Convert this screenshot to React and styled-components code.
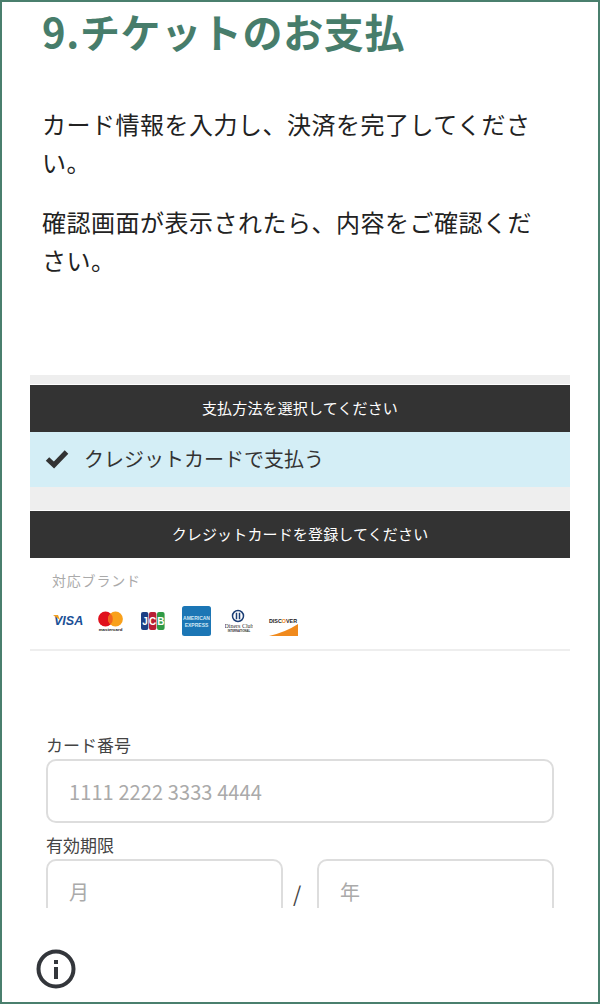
import React from "react";
import styled, { createGlobalStyle } from "styled-components";

const GlobalStyle = createGlobalStyle`
  html, body {
    margin: 0;
    padding: 0;
    background: #fff;
  }
  * {
    box-sizing: border-box;
  }
`;

const Frame = styled.div`
  width: 600px;
  height: 1004px;
  border: 2px solid #4a7f6d;
  background: #fff;
  overflow: hidden;
  display: flex;
  flex-direction: column;
  font-family: "Noto Sans CJK JP", "Noto Sans", sans-serif;
`;

const Viewport = styled.div`
  height: 906px;
  overflow: hidden;
  flex: none;
`;

const Intro = styled.section`
  padding: 0 60px 0 40px;
  height: 373px;
`;

const Title = styled.h1`
  margin: 0;
  height: 58px;
  line-height: 58px;
  font-size: 40px;
  font-weight: 700;
  color: #477d6b;
  letter-spacing: 0.65px;
  white-space: nowrap;
`;

const Paragraph = styled.p`
  margin: 0 0 22px;
  font-size: 24px;
  line-height: 38px;
  letter-spacing: 0.5px;
  color: #222;
  &:first-of-type {
    margin-top: 45px;
  }
`;

const Payment = styled.section`
  margin: 0 28px;
`;

const GraySpacer = styled.div`
  height: ${(p) => p.$h}px;
  background: #eeeeee;
`;

const DarkBar = styled.div`
  height: 47px;
  margin-top: 1px;
  padding-bottom: 2px;
  background: #333333;
  color: #fff;
  font-size: 15px;
  letter-spacing: 0.15px;
  display: flex;
  align-items: center;
  justify-content: center;
`;

const Selected = styled.div`
  height: 55px;
  padding: 0 0 2px 15px;
  background: #d4eef6;
  display: flex;
  align-items: center;
  gap: 15px;
  color: #333;
  font-size: 20px;
`;

const BrandBlock = styled.div`
  height: 93px;
  padding: 12px 0 0 22px;
  border-bottom: 2px solid #eeeeee;
`;

const BrandLabel = styled.div`
  font-size: 14px;
  line-height: 20px;
  color: #aaaaaa;
  letter-spacing: 0.8px;
`;

const BrandRow = styled.div`
  display: grid;
  grid-template-columns: 45px 43px 41px 43px 43px 30px;
  margin: 16px 0 0 1px;
`;

const Form = styled.form`
  margin: 0 44px;
  padding-top: 82px;
`;

const FieldLabel = styled.label`
  display: block;
  height: 26px;
  font-size: 17px;
  line-height: 24px;
  color: #444;
`;

const FieldBox = styled.div`
  flex: 1;
  height: 64px;
  border: 2px solid #dddddd;
  border-radius: 10px;
  padding-left: 21px;
  display: flex;
  align-items: center;
  font-size: 20px;
  letter-spacing: 0.1px;
  color: #aaaaaa;
`;

const CardField = styled(FieldBox)`
  margin-bottom: 10px;
`;

const DateRow = styled.div`
  display: flex;
  align-items: center;
`;

const Slash = styled.span`
  width: 34px;
  padding: 3px 6px 0 0;
  text-align: center;
  font-size: 21px;
  line-height: 24px;
  color: #444;
`;

const Footer = styled.footer`
  padding: 39px 0 0 32px;
`;

const InfoIcon = () => (
  <svg width="44" height="44" viewBox="0 0 44 44" fill="none">
    <circle cx="22" cy="22" r="17.5" stroke="#33363b" strokeWidth="4" />
    <rect x="20" y="20" width="4" height="12" fill="#33363b" />
    <rect x="20" y="13" width="4" height="4" fill="#33363b" />
  </svg>
);

const CheckIcon = () => (
  <svg width="24" height="20" viewBox="0 0 24 20" fill="none">
    <path d="M2.5 10 L9 16 L21.5 3" stroke="#333" strokeWidth="5" />
  </svg>
);

const Visa = () => (
  <svg width="30" height="30" viewBox="0 0 30 30">
    <text x="1" y="19" fontFamily="Liberation Sans" fontSize="12.5" fontWeight="700" fontStyle="italic" fill="#1a5096">
      VISA
    </text>
    <path d="M0 9 L5 9 L7 14 Z" fill="#f0a020" />
  </svg>
);

const Mastercard = () => (
  <svg width="25" height="30" viewBox="0 0 25 30">
    <circle cx="7.5" cy="13" r="7.4" fill="#e0101c" />
    <circle cx="17.5" cy="13" r="7.4" fill="#f9a11b" />
    <path d="M12.5 7.6 A7.4 7.4 0 0 1 12.5 18.4 A7.4 7.4 0 0 1 12.5 7.6 Z" fill="#f2641f" />
    <text x="12.5" y="25" textAnchor="middle" fontFamily="Liberation Sans" fontSize="4.4" fontWeight="700" fill="#222">
      mastercard
    </text>
  </svg>
);

const JcbLetter = styled.text`
  font-family: "Liberation Sans", sans-serif;
  font-size: 10px;
  font-weight: 700;
  fill: #fff;
  text-anchor: middle;
`;

const Jcb = () => (
  <svg width="24" height="30" viewBox="0 0 24 30">
    <rect x="0" y="6" width="7.4" height="18" rx="2" fill="#1c3f85" />
    <rect x="8" y="6" width="7.4" height="18" rx="2" fill="#b81f35" />
    <rect x="16" y="6" width="7.6" height="18" rx="2" fill="#2f9a45" />
    <JcbLetter x="4" y="19">J</JcbLetter>
    <JcbLetter x="11.7" y="19">C</JcbLetter>
    <JcbLetter x="19.8" y="19">B</JcbLetter>
  </svg>
);

const Amex = () => (
  <svg width="29" height="30" viewBox="0 0 29 30">
    <rect width="29" height="30" rx="2.5" fill="#1b76b5" />
    <text x="14.5" y="14" textAnchor="middle" fontFamily="Liberation Sans" fontSize="5" fontWeight="700" fill="#cfe6f4">
      AMERICAN
    </text>
    <text x="14.5" y="21" textAnchor="middle" fontFamily="Liberation Sans" fontSize="5" fontWeight="700" fill="#cfe6f4">
      EXPRESS
    </text>
  </svg>
);

const Diners = () => (
  <svg width="28" height="30" viewBox="0 0 28 30">
    <circle cx="13" cy="10" r="5.5" fill="none" stroke="#1b3e75" strokeWidth="1.5" />
    <path d="M11.5 6.8 V13.2 M14.5 6.8 V13.2" stroke="#1b3e75" strokeWidth="1.5" />
    <text x="14" y="22" textAnchor="middle" fontFamily="Liberation Serif" fontSize="6" fill="#333">
      Diners Club
    </text>
    <text x="14" y="25.5" textAnchor="middle" fontFamily="Liberation Sans" fontSize="2.8" fontWeight="700" fill="#333">
      INTERNATIONAL
    </text>
  </svg>
);

const Discover = () => (
  <svg width="30" height="30" viewBox="0 0 30 30">
    <text x="15" y="17" textAnchor="middle" fontFamily="Liberation Sans" fontSize="5.4" fontWeight="700" fill="#222">
      DISC<tspan fill="#f08a1d">O</tspan>VER
    </text>
    <path d="M1 30 Q18 26 30 18 V30 Z" fill="#f08a1d" />
  </svg>
);

const App = () => {
  return (
    <>
      <GlobalStyle />
      <Frame>
        <Viewport>
          <Intro>
            <Title>9.チケットのお支払</Title>
            <Paragraph>カード情報を入力し、決済を完了してください。</Paragraph>
            <Paragraph>確認画面が表示されたら、内容をご確認ください。</Paragraph>
          </Intro>
          <Payment>
            <GraySpacer $h={9} />
            <DarkBar>支払方法を選択してください</DarkBar>
            <Selected>
              <CheckIcon />
              <span>クレジットカードで支払う</span>
            </Selected>
            <GraySpacer $h={23} />
            <DarkBar>クレジットカードを登録してください</DarkBar>
            <BrandBlock>
              <BrandLabel>対応ブランド</BrandLabel>
              <BrandRow>
                <Visa />
                <Mastercard />
                <Jcb />
                <Amex />
                <Diners />
                <Discover />
              </BrandRow>
            </BrandBlock>
          </Payment>
          <Form>
            <FieldLabel>カード番号</FieldLabel>
            <CardField>1111 2222 3333 4444</CardField>
            <FieldLabel>有効期限</FieldLabel>
            <DateRow>
              <FieldBox>月</FieldBox>
              <Slash>/</Slash>
              <FieldBox>年</FieldBox>
            </DateRow>
          </Form>
        </Viewport>
        <Footer>
          <InfoIcon />
        </Footer>
      </Frame>
    </>
  );
};

export default App;
